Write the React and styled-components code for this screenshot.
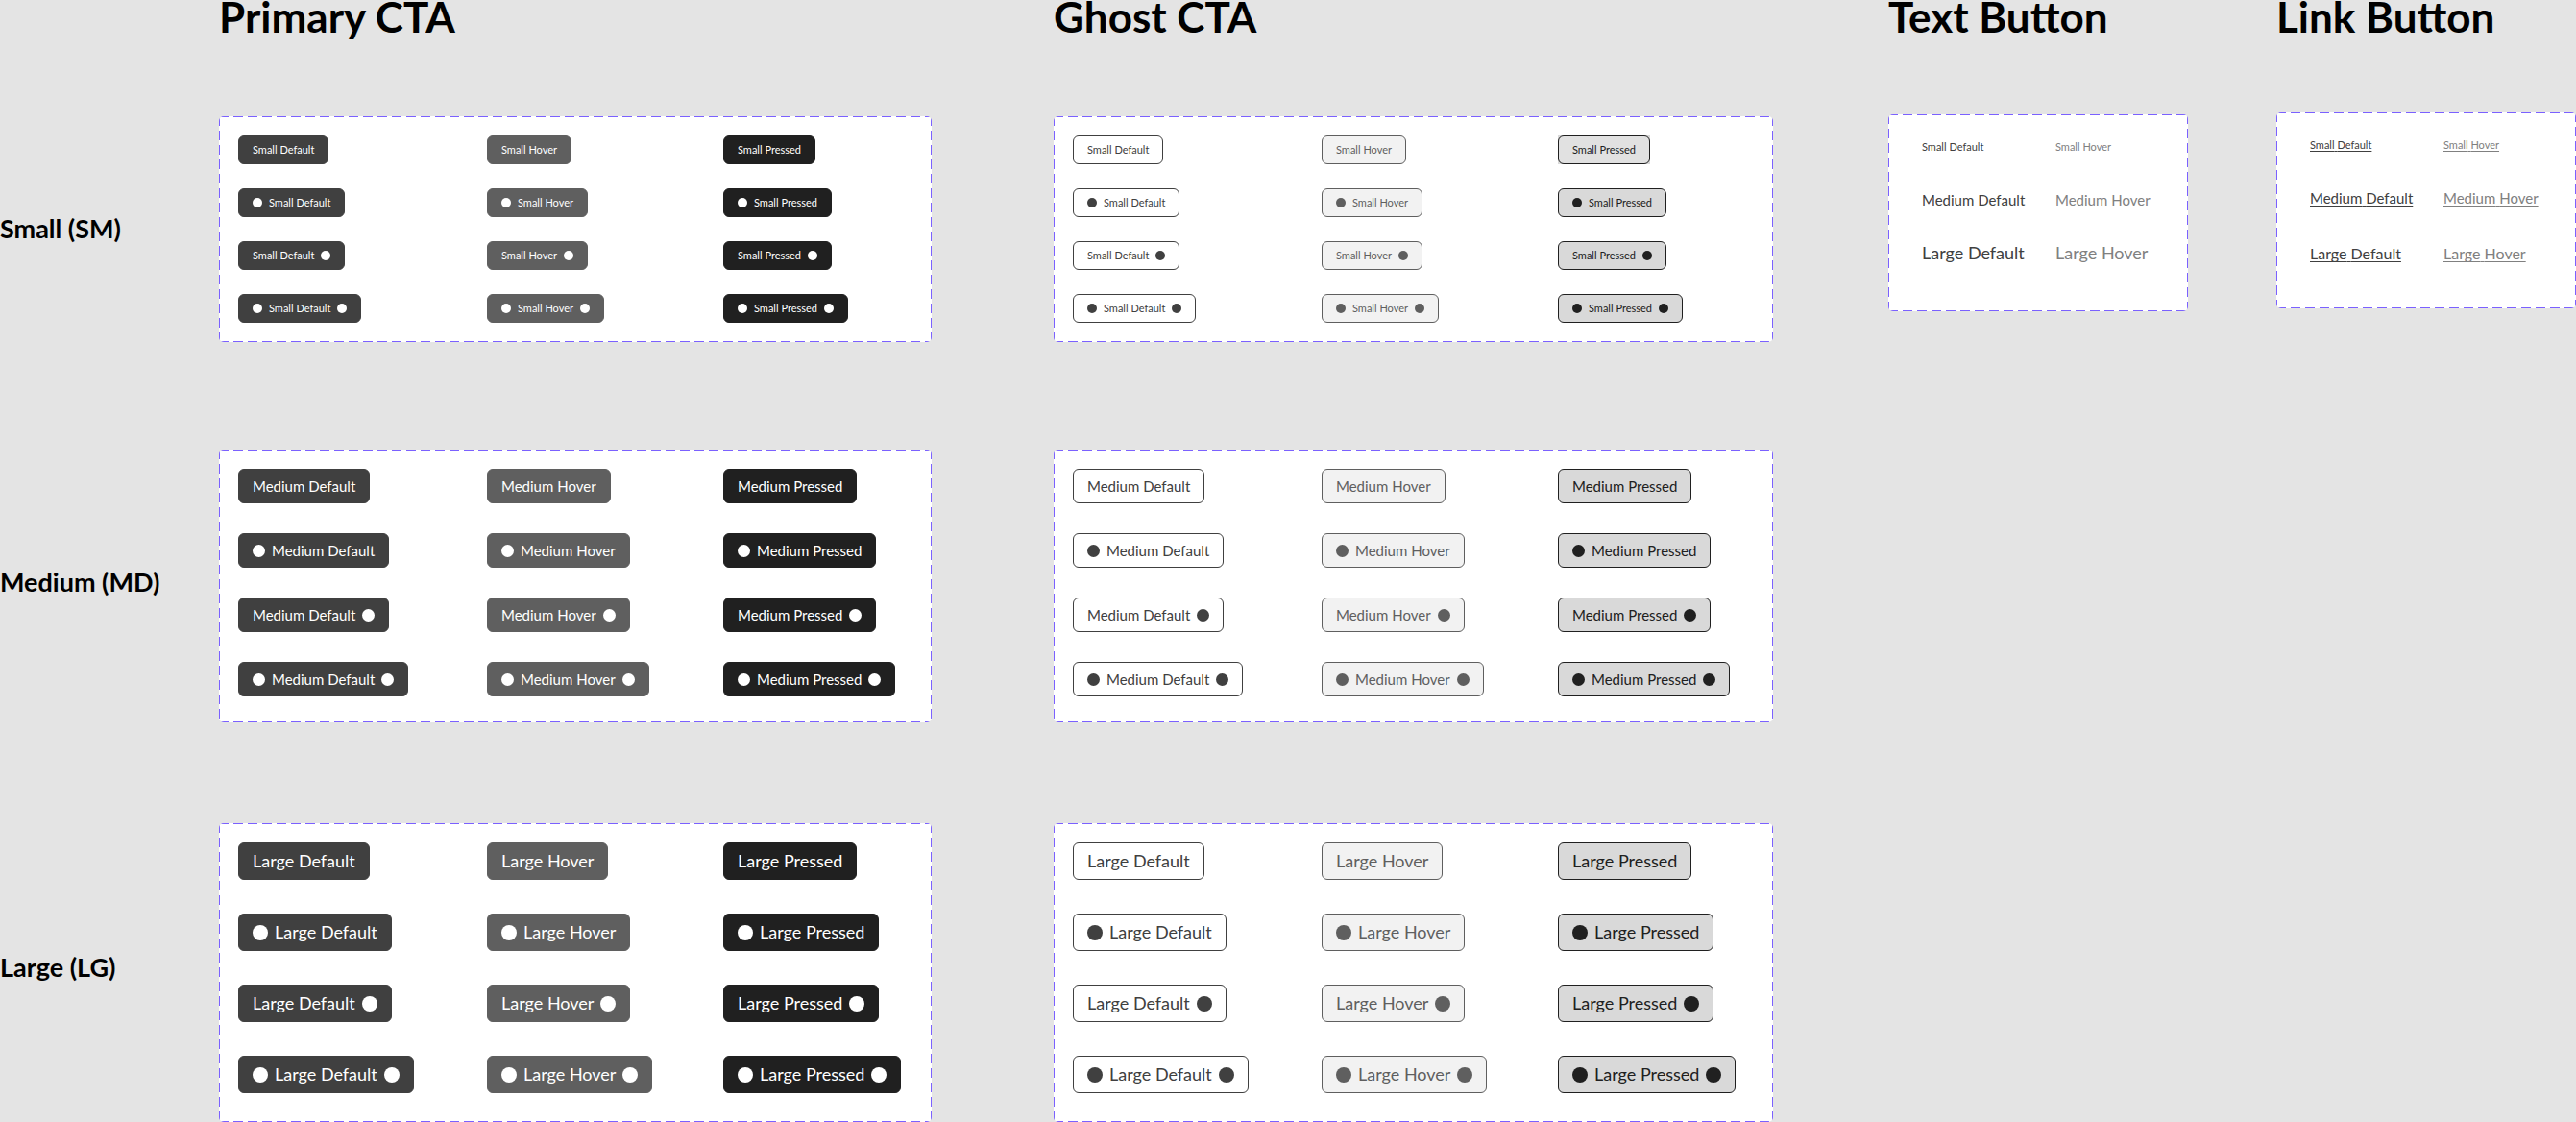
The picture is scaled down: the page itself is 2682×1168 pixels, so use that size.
import React from "react";
import styled, { createGlobalStyle } from "styled-components";

const GlobalStyle = createGlobalStyle`
  *, *::before, *::after { box-sizing: border-box; }
  body {
    margin: 0;
    background: #e4e4e4;
    color: #000;
    font-family: Lato, "Open Sans", sans-serif;
  }
`;

const sizes = {
  small: { label: "Small (SM)", font: 11, line: 14, dot: 10, rowGap: 25, bottom: 20, after: 112, lift: 2 },
  medium: { label: "Medium (MD)", font: 15, line: 20, dot: 13, rowGap: 31, bottom: 27, after: 105, lift: 8 },
  large: { label: "Large (LG)", font: 18, line: 23, dot: 16, rowGap: 35, bottom: 30, after: 0, lift: 12 },
};

const tones = {
  primary: {
    Default: { fill: "#404040", stroke: "#404040", ink: "#fff" },
    Hover: { fill: "#5f5f5f", stroke: "#5f5f5f", ink: "#fff" },
    Pressed: { fill: "#202020", stroke: "#202020", ink: "#fff" },
  },
  ghost: {
    Default: { fill: "#fff", stroke: "#404040", ink: "#404040" },
    Hover: { fill: "#f2f2f2", stroke: "#5f5f5f", ink: "#5f5f5f" },
    Pressed: { fill: "#d9d9d9", stroke: "#202020", ink: "#202020" },
  },
};

const states = ["Default", "Hover", "Pressed"];
const iconSlots = [
  { id: "plain", left: false, right: false },
  { id: "left", left: true, right: false },
  { id: "right", left: false, right: true },
  { id: "both", left: true, right: true },
];

const Page = styled.main`
  display: grid;
  grid-template-columns: 1966fr 404fr 312fr;
  align-items: start;
`;

const Matrix = styled.div`
  display: grid;
  grid-template-columns: 228px 1fr 1fr;
`;

const ColumnTitle = styled.h2`
  margin: 0 0 ${(p) => p.$space}px;
  font-size: 44px;
  font-weight: 700;
  line-height: 34px;
  white-space: nowrap;
`;

const SizeTitle = styled.h3`
  display: flex;
  align-items: center;
  margin: 0 0 ${(p) => p.$size.after}px;
  padding-bottom: ${(p) => p.$size.lift}px;
  font-size: 27px;
  font-weight: 700;
  line-height: 36px;
  white-space: nowrap;
`;

const Panel = styled.div`
  display: grid;
  background-color: #fff;
  background-image:
    linear-gradient(90deg, #7b61ff 67%, transparent 0),
    linear-gradient(90deg, #7b61ff 67%, transparent 0),
    linear-gradient(180deg, #7b61ff 67%, transparent 0),
    linear-gradient(180deg, #7b61ff 67%, transparent 0);
  background-size: 15px 1px, 15px 1px, 1px 15px, 1px 15px;
  background-position: top left, bottom left, top left, top right;
  background-repeat: repeat-x, repeat-x, repeat-y, repeat-y;
  border-radius: 5px;
`;

const ButtonPanel = styled(Panel)`
  grid-template-columns: 259px 246px 1fr;
  justify-items: start;
  row-gap: ${(p) => p.$size.rowGap}px;
  margin: 0 ${(p) => p.$aside}px ${(p) => p.$size.after}px 0;
  padding: 20px 20px ${(p) => p.$size.bottom}px;
`;

const TextPanel = styled(Panel)`
  grid-template-columns: 139px 1fr;
  grid-template-rows: ${(p) => p.$rows};
  align-items: center;
  justify-items: start;
  margin-right: ${(p) => p.$aside}px;
  padding: 6px 35px ${(p) => p.$bottom}px;
`;

const CtaButton = styled.button`
  display: inline-flex;
  align-items: center;
  gap: 7px;
  padding: 7px 14px;
  border: 1px solid ${(p) => p.$tone.stroke};
  border-radius: 6px;
  background: ${(p) => p.$tone.fill};
  color: ${(p) => p.$tone.ink};
  font-family: inherit;
  font-size: ${(p) => p.$size.font}px;
  line-height: ${(p) => p.$size.line}px;
  white-space: nowrap;
  cursor: pointer;
`;

const Backplate = styled.div`
  display: flex;
  background: #d9d9d9;
`;

const Dot = styled.span`
  width: ${(p) => p.$size.dot}px;
  height: ${(p) => p.$size.dot}px;
  border-radius: 50%;
  background: currentColor;
`;

const PlainButton = styled.button`
  padding: 0;
  border: 0;
  background: none;
  color: ${(p) => (p.$hover ? "#808080" : "#404040")};
  font-family: inherit;
  font-size: ${(p) => p.$font}px;
  white-space: nowrap;
  cursor: pointer;
`;

const PlainLink = styled.a`
  color: ${(p) => (p.$hover ? "#808080" : "#404040")};
  font-size: ${(p) => p.$font}px;
  text-decoration: underline 1px;
  text-underline-offset: 2px;
  text-decoration-skip-ink: none;
  white-space: nowrap;
`;

function titleCase(name) {
  return name[0].toUpperCase() + name.slice(1);
}

function Cta({ kind, sizeName, state, slot }) {
  const size = sizes[sizeName];
  const base = tones[kind][state];
  const backed = kind === "ghost" && sizeName === "small" && state === "Pressed" && slot.id === "plain";
  const tone = backed ? { ...base, fill: "#e1e1e1" } : base;
  const button = (
    <CtaButton type="button" $size={size} $tone={tone}>
      {slot.left && <Dot $size={size} />}
      {titleCase(sizeName)} {state}
      {slot.right && <Dot $size={size} />}
    </CtaButton>
  );
  return backed ? <Backplate>{button}</Backplate> : button;
}

function CtaPanel({ kind, sizeName, aside }) {
  return (
    <ButtonPanel $size={sizes[sizeName]} $aside={aside}>
      {iconSlots.map((slot) =>
        states.map((state) => (
          <Cta key={slot.id + state} kind={kind} sizeName={sizeName} state={state} slot={slot} />
        ))
      )}
    </ButtonPanel>
  );
}

const textRows = [
  { name: "Small", text: 11, link: 11 },
  { name: "Medium", text: 15, link: 15 },
  { name: "Large", text: 18, link: 16 },
];

export default function App() {
  return (
    <>
      <GlobalStyle />
      <Page>
        <Matrix>
          <span />
          <ColumnTitle $space={87}>Primary CTA</ColumnTitle>
          <ColumnTitle $space={87}>Ghost CTA</ColumnTitle>
          {Object.keys(sizes).map((name) => (
            <React.Fragment key={name}>
              <SizeTitle $size={sizes[name]}>{sizes[name].label}</SizeTitle>
              <CtaPanel kind="primary" sizeName={name} aside={127} />
              <CtaPanel kind="ghost" sizeName={name} aside={120} />
            </React.Fragment>
          ))}
        </Matrix>
        <section>
          <ColumnTitle $space={85}>Text Button</ColumnTitle>
          <TextPanel $rows="55px 55px 55px" $bottom={34} $aside={92}>
            {textRows.map((row) =>
              ["Default", "Hover"].map((state) => (
                <PlainButton key={row.name + state} type="button" $font={row.text} $hover={state === "Hover"}>
                  {row.name} {state}
                </PlainButton>
              ))
            )}
          </TextPanel>
        </section>
        <section>
          <ColumnTitle $space={83}>Link Button</ColumnTitle>
          <TextPanel $rows="55px 55px 61px" $bottom={27} $aside={0}>
            {textRows.map((row) =>
              ["Default", "Hover"].map((state) => (
                <PlainLink key={row.name + state} href="#" $font={row.link} $hover={state === "Hover"}>
                  {row.name} {state}
                </PlainLink>
              ))
            )}
          </TextPanel>
        </section>
      </Page>
    </>
  );
}
